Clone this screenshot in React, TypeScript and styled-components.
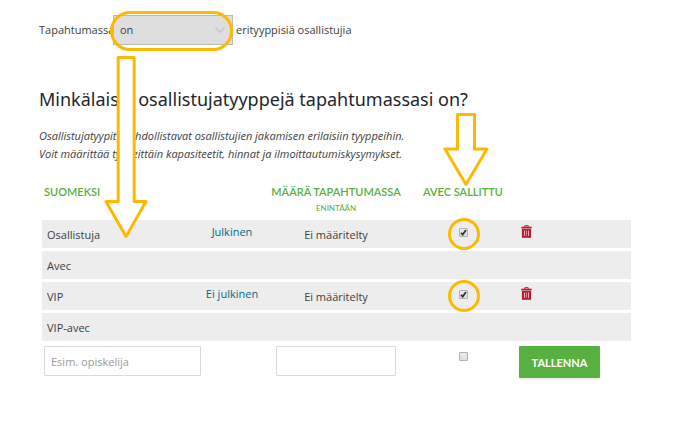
import React from "react";
import styled, { createGlobalStyle } from "styled-components";

const GlobalStyle = createGlobalStyle`
  *, *::before, *::after { box-sizing: border-box; }
  body {
    margin: 0;
    background: #fff;
    color: #404040;
    font: 11px/18px "Open Sans", "Noto Sans", sans-serif;
  }
`;

const highlight = "#fdb900";
const green = "#58b040";

const Page = styled.main`
  position: relative;
  padding: 15px 58px 44px 39px;
`;

const Sentence = styled.div`
  display: flex;
  align-items: center;
  gap: 3px;
  white-space: nowrap;
`;

const Lead = styled.label`
  width: 71px;
`;

const SelectWrap = styled.div`
  position: relative;
  width: 120px;
  height: 30px;
`;

const Select = styled.select`
  appearance: none;
  width: 100%;
  height: 100%;
  padding: 0 6px;
  border: 1px solid #b9b9b9;
  border-radius: 0;
  background: #dedede;
  color: #404040;
  font: inherit;
`;

const Chevron = styled.svg`
  position: absolute;
  top: 11px;
  right: 7px;
  width: 12px;
  height: 8px;
  pointer-events: none;
`;

const Pill = styled.span`
  position: absolute;
  inset: -4px 0 -6px -3px;
  border: 3px solid ${highlight};
  border-radius: 20px;
  pointer-events: none;
`;

const Title = styled.h1`
  margin: 41px 0 0;
  color: #1c262b;
  font: 400 18px/26px "Noto Sans", "Open Sans", sans-serif;
  white-space: nowrap;
`;

const Intro = styled.p`
  margin: 15px 0 0;
  font-style: italic;
  white-space: nowrap;
`;

const Table = styled.table`
  width: calc(100% - 3px);
  margin: 16px 0 0 3px;
  border-spacing: 0 3px;
  table-layout: fixed;
`;

const HeadCell = styled.th<{ $start?: boolean }>`
  height: 35px;
  padding: ${(p) => (p.$start ? "1px 0 0 2px" : "1px 0 0")};
  color: ${green};
  font: 600 11px/18px Lato, sans-serif;
  text-align: ${(p) => (p.$start ? "left" : "center")};
  vertical-align: top;
  white-space: nowrap;
`;

const HeadNote = styled.small`
  display: block;
  font: 400 8px/14px Lato, sans-serif;
`;

const Cell = styled.td<{ $align?: "left" | "center"; $raised?: boolean }>`
  height: 28px;
  padding: ${(p) => (p.$raised ? "0 0 4px" : "1px 0 0")};
  padding-left: ${(p) => (p.$align === "left" ? "5px" : "0")};
  background: #ededed;
  text-align: ${(p) => p.$align ?? "center"};
  vertical-align: middle;
  line-height: 16px;
  white-space: nowrap;
`;

const FormCell = styled.td<{ $start?: boolean }>`
  padding: ${(p) => (p.$start ? "2px 0 0 2px" : "2px 0 0")};
  text-align: ${(p) => (p.$start ? "left" : "center")};
  vertical-align: top;
`;

const Visibility = styled.a`
  color: #006a86;
  text-decoration: none;
`;

const TextBox = styled.input<{ $wide?: boolean }>`
  display: block;
  width: ${(p) => (p.$wide ? "157px" : "120px")};
  height: 30px;
  margin: ${(p) => (p.$wide ? "0" : "0 auto")};
  padding: 0 6px;
  border: 1px solid #d9d9d9;
  border-radius: 1px;
  background: #fff;
  color: #404040;
  font: inherit;
  &::placeholder { color: #999; opacity: 1; }
`;

const CheckWrap = styled.span<{ $low?: boolean }>`
  position: relative;
  display: block;
  width: 9px;
  height: 9px;
  margin: ${(p) => (p.$low ? "6px auto 0" : "0 auto")};
`;

const Check = styled.input`
  appearance: none;
  display: block;
  width: 9px;
  height: 9px;
  margin: 0;
  border: 1px solid #b2b2b2;
  border-radius: 1px;
  background: linear-gradient(#ececec, #dedede);
`;

const Tick = styled.svg`
  position: absolute;
  inset: 0;
  width: 9px;
  height: 9px;
  pointer-events: none;
`;

const Ring = styled.span`
  position: absolute;
  top: -10px;
  left: -11px;
  width: 32px;
  height: 32px;
  border: 3px solid ${highlight};
  border-radius: 50%;
  pointer-events: none;
`;

const DeleteButton = styled.button`
  display: block;
  margin-left: 5px;
  padding: 0 0 2px;
  border: 0;
  background: none;
  line-height: 0;
`;

const SaveButton = styled.button`
  display: block;
  width: 81px;
  height: 32px;
  margin-left: 3px;
  padding: 2px 0 0;
  border: 0;
  border-radius: 1px;
  background: ${green};
  box-shadow: 0 2px 0 #f0f0f0;
  color: #fff;
  font: 700 11px/18px Lato, sans-serif;
`;

const LongArrow = styled.svg`
  position: absolute;
  top: 56px;
  left: 104px;
  width: 44px;
  height: 183px;
  pointer-events: none;
`;

const ShortArrow = styled.svg`
  position: absolute;
  top: 113px;
  left: 443px;
  width: 46px;
  height: 74px;
  pointer-events: none;
`;

function Trash() {
  return (
    <svg width="11" height="13" viewBox="0 0 11 13" aria-hidden="true">
      <path d="M3.8 2V.7h3.4V2" fill="none" stroke="#c01830" />
      <path d="M.3 1.7h10.4v1.8H.3z" fill="#c01830" />
      <path d="M1.5 4.5h8v7.7h-8z" fill="#c01830" stroke="#c01830" strokeWidth="1.2" />
      <path d="M3.5 5.5v5.3M7.500 5.5v5.3" stroke="#eeb8c0" strokeWidth="1" />
      <path d="M5.5 5.500v5.300" stroke="#d98490" strokeWidth="1" />
    </svg>
  );
}

interface RowData {
  name: string;
  visibility?: string;
  limit?: string;
}

const rows: RowData[] = [
  { name: "Osallistuja", visibility: "Julkinen", limit: "Ei määritelty" },
  { name: "Avec" },
  { name: "VIP", visibility: "Ei julkinen", limit: "Ei määritelty" },
  { name: "VIP-avec" },
];

function TypeRow({ name, visibility, limit }: RowData) {
  return (
    <tr>
      <Cell $align="left">{name}</Cell>
      <Cell $raised>{visibility && <Visibility href="#">{visibility}</Visibility>}</Cell>
      <Cell>{limit}</Cell>
      <Cell $raised>
        {visibility && (
          <CheckWrap>
            <Check type="checkbox" defaultChecked aria-label={`Avec sallittu: ${name}`} />
            <Tick viewBox="0 0 9 9" aria-hidden="true">
              <path d="M2 4.8l1.7 1.7L7 2" fill="none" stroke="#333" strokeWidth="1.8" />
            </Tick>
            <Ring />
          </CheckWrap>
        )}
      </Cell>
      <Cell $raised>
        {visibility && (
          <DeleteButton type="button" aria-label={`Poista ${name}`}>
            <Trash />
          </DeleteButton>
        )}
      </Cell>
    </tr>
  );
}

export default function App() {
  return (
    <>
      <GlobalStyle />
      <Page>
        <Sentence>
          <Lead htmlFor="types">Tapahtumassa</Lead>
          <SelectWrap>
            <Select id="types" defaultValue="on">
              <option value="on">on</option>
              <option value="ei">ei ole</option>
            </Select>
            <Chevron viewBox="0 0 12 8" aria-hidden="true">
              <path d="M1.5 1.5L6 6l4.5-4.5" fill="none" stroke="#cdcdcd" strokeWidth="2" />
            </Chevron>
            <Pill />
          </SelectWrap>
          <span>erityyppisiä osallistujia</span>
        </Sentence>

        <Title>Minkälaisia osallistujatyyppejä tapahtumassasi on?</Title>
        <Intro>
          Osallistujatyypit mahdollistavat osallistujien jakamisen erilaisiin tyyppeihin.
          <br />
          Voit määrittää tyypeittäin kapasiteetit, hinnat ja ilmoittautumiskysymykset.
        </Intro>

        <Table>
          <colgroup>
            <col width="160" />
            <col width="60" />
            <col width="148" />
            <col width="106" />
            <col />
          </colgroup>
          <thead>
            <tr>
              <HeadCell $start>SUOMEKSI</HeadCell>
              <HeadCell as="td" />
              <HeadCell>
                MÄÄRÄ TAPAHTUMASSA
                <HeadNote>ENINTÄÄN</HeadNote>
              </HeadCell>
              <HeadCell>AVEC SALLITTU</HeadCell>
              <HeadCell as="td" />
            </tr>
          </thead>
          <tbody>
            {rows.map((row) => (
              <TypeRow key={row.name} {...row} />
            ))}
            <tr>
              <FormCell $start>
                <TextBox $wide placeholder="Esim. opiskelija" aria-label="Suomeksi" />
              </FormCell>
              <FormCell />
              <FormCell>
                <TextBox aria-label="Määrä tapahtumassa enintään" />
              </FormCell>
              <FormCell>
                <CheckWrap $low>
                  <Check type="checkbox" aria-label="Avec sallittu" />
                </CheckWrap>
              </FormCell>
              <FormCell>
                <SaveButton type="button">TALLENNA</SaveButton>
              </FormCell>
            </tr>
          </tbody>
        </Table>

        <LongArrow viewBox="0 0 44 183" aria-hidden="true">
          <path
            d="M14.2 1.5h16v144H42L22 180.5 2 145.5h12.2z"
            fill="#fff"
            stroke={highlight}
            strokeWidth="3"
            strokeLinejoin="round"
          />
        </LongArrow>
        <ShortArrow viewBox="0 0 46 74" aria-hidden="true">
          <path
            d="M14.5 1.5h17v34.5H44L23 71.5 2 36h12.5z"
            fill="#fff"
            stroke={highlight}
            strokeWidth="3"
            strokeLinejoin="round"
          />
        </ShortArrow>
      </Page>
    </>
  );
}
